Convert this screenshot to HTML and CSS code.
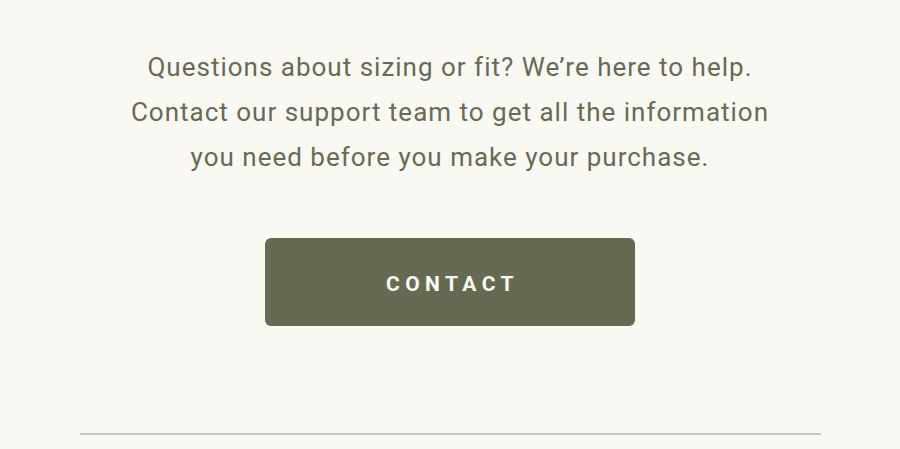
FILE: index.html
```html
<!DOCTYPE html>
<html lang="en">
<head>
    <meta charset="UTF-8">
    <meta name="viewport" content="width=device-width, initial-scale=1.0">
    <title>Sizing Help</title>
    <link rel="stylesheet" href="styles.css">
</head>
<body>
    <div class="help-section">
        <p class="help-text">Questions about sizing or fit? We’re here to help.<br>Contact our support team to get all the information<br>you need before you make your purchase.</p>

        <div class="action-buttons">
            <button>CONTACT</button>
        </div>

        <hr class="divider">
    </div>
</body>
</html>
```

FILE: styles.css
```css
* {
    margin: 0;
    padding: 0;
    box-sizing: border-box;
}
body {
    background-color: #f9f8f3;
    font-family: Roboto, "Liberation Sans", sans-serif;
    color: #686a57;
}
.help-section {
    padding-top: 45px;
    display: flex;
    flex-direction: column;
    align-items: center;
}
.help-text {
    font-size: 26px;
    line-height: 45px;
    text-align: center;
    letter-spacing: 1px;
}
.action-buttons {
    margin-top: 58px;
}
.action-buttons button {
    width: 370px;
    height: 88px;
    background-color: #676a53;
    color: #f9f8f3;
    border: none;
    border-radius: 6px;
    font-family: Roboto, "Liberation Sans", sans-serif;
    font-weight: bold;
    font-size: 21px;
    letter-spacing: 5.4px;
    padding: 3px 0 0 5px;
    cursor: pointer;
}
.divider {
    margin-top: 107px;
    width: 741px;
    border: none;
    border-top: 2px solid #c6c5be;
}
```
